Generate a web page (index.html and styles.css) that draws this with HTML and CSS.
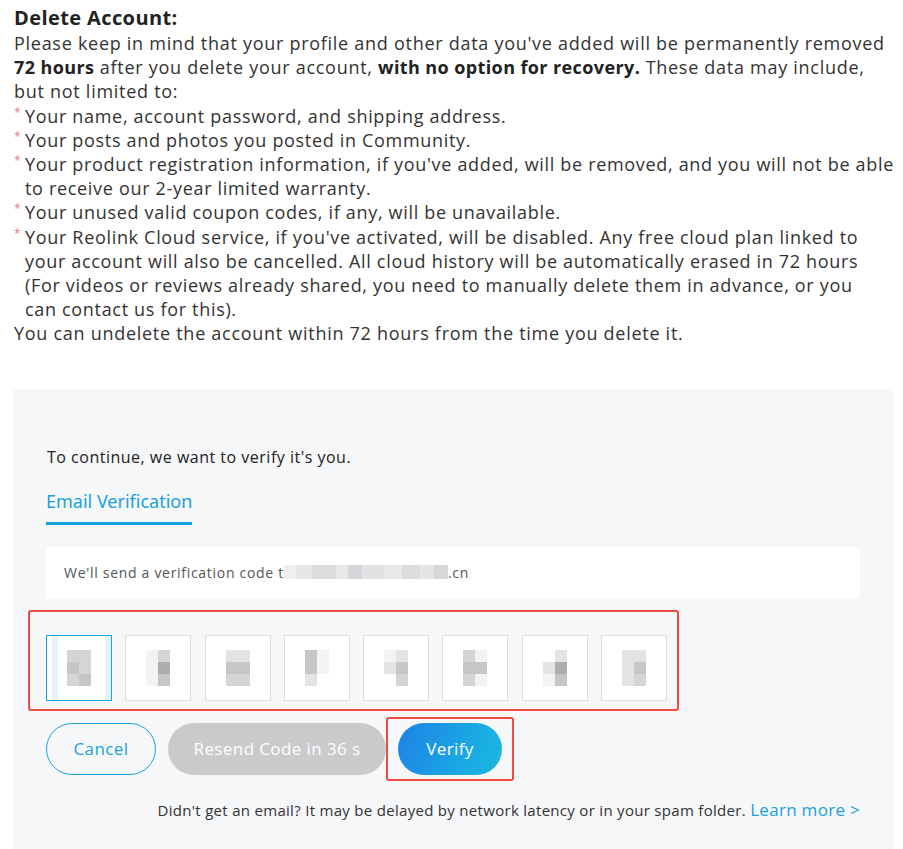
FILE: index.html
```html
<!DOCTYPE html>
<html lang="en">
<head>
<meta charset="utf-8">
<title>Delete Account</title>
<link rel="stylesheet" href="styles.css">
</head>
<body>
<section class="intro">
  <h1 class="title">Delete Account:</h1>
  <p class="para">Please keep in mind that your profile and other data you've added will be permanently removed<br><b>72 hours</b> after you delete your account, <b>with no option for recovery.</b> These data may include,<br>but not limited to:</p>
  <ul class="list">
    <li><span class="star">*</span><span class="item">Your name, account password, and shipping address.</span></li>
    <li><span class="star">*</span><span class="item">Your posts and photos you posted in Community.</span></li>
    <li><span class="star">*</span><span class="item">Your product registration information, if you've added, will be removed, and you will not be able<br>to receive our 2-year limited warranty.</span></li>
    <li><span class="star">*</span><span class="item">Your unused valid coupon codes, if any, will be unavailable.</span></li>
    <li><span class="star">*</span><span class="item">Your Reolink Cloud service, if you've activated, will be disabled. Any free cloud plan linked to<br>your account will also be cancelled. All cloud history will be automatically erased in 72 hours<br>(For videos or reviews already shared, you need to manually delete them in advance, or you<br>can contact us for this).</span></li>
  </ul>
  <p class="para">You can undelete the account within 72 hours from the time you delete it.</p>
</section>

<section class="panel">
  <p class="lead">To continue, we want to verify it's you.</p>
  <div class="tabs"><span class="tab">Email Verification</span></div>
  <div class="notice">We'll send a verification code t<span class="masked"></span>.cn</div>

  <div class="code-wrap">
    <div class="codes">
      <div class="code active"><div class="blur"><i class="g2"></i><i class="g2"></i><i class="g3"></i><i class="g2"></i><i class="g2"></i><i class="g3"></i></div></div>
      <div class="code"><div class="blur"><i class="g0"></i><i class="g2"></i><i class="g0"></i><i class="g4"></i><i class="g0"></i><i class="g3"></i></div></div>
      <div class="code"><div class="blur"><i class="g1"></i><i class="g1"></i><i class="g3"></i><i class="g3"></i><i class="g2"></i><i class="g2"></i></div></div>
      <div class="code"><div class="blur"><i class="g3"></i><i class="g0"></i><i class="g3"></i><i class="g0"></i><i class="g1"></i><i class="w"></i></div></div>
      <div class="code"><div class="blur"><i class="g0"></i><i class="g1"></i><i class="g1"></i><i class="g3"></i><i class="w"></i><i class="g2"></i></div></div>
      <div class="code"><div class="blur"><i class="g2"></i><i class="g0"></i><i class="g3"></i><i class="g3"></i><i class="g2"></i><i class="g0"></i></div></div>
      <div class="code"><div class="blur"><i class="w"></i><i class="g1"></i><i class="g1"></i><i class="g4"></i><i class="g0"></i><i class="g3"></i></div></div>
      <div class="code"><div class="blur"><i class="g1"></i><i class="g1"></i><i class="g1"></i><i class="g3"></i><i class="g1"></i><i class="g2"></i></div></div>
    </div>
  </div>

  <div class="actions">
    <button class="btn btn-cancel">Cancel</button>
    <button class="btn btn-resend">Resend Code in 36 s</button>
    <div class="verify-wrap"><button class="btn btn-verify">Verify</button></div>
  </div>

  <p class="help">Didn't get an email? It may be delayed by network latency or in your spam folder. <a class="link" href="#">Learn more &gt;</a></p>
</section>
</body>
</html>
```
FILE: styles.css
```css
* { box-sizing: border-box; }
html, body { margin: 0; padding: 0; background: #fff; }
body {
  font-family: "Open Sans", "Noto Sans", sans-serif;
  color: #333;
}

.intro {
  padding: 5px 0 0 14px;
  width: 903px;
}
.title {
  margin: 0;
  font-size: 20px;
  line-height: 26px;
  font-weight: 700;
  letter-spacing: 0.4px;
  color: #222;
}
.para {
  margin: 0;
  font-size: 18px;
  line-height: 24.2px;
  letter-spacing: 0.72px;
  white-space: nowrap;
}
.para b { font-weight: 700; color: #222; letter-spacing: 0.4px; }
.list {
  list-style: none;
  margin: 0;
  padding: 0;
  font-size: 18px;
  line-height: 24.2px;
  letter-spacing: 0.68px;
}
.list li { display: flex; }
.item { white-space: nowrap; }
.star {
  flex: 0 0 11px;
  color: #f07a7a;
  font-size: 12px;
  line-height: 18px;
  letter-spacing: 0;
}

.panel {
  margin: 43px 0 0 13px;
  width: 880px;
  background: #f6f7f9;
  padding: 57px 33px 50px 33px;
}
.lead {
  margin: 0 0 0 1px;
  font-size: 16px;
  line-height: 22px;
  letter-spacing: 0.5px;
  color: #222;
}
.tabs {
  margin-top: 21px;
  display: flex;
}
.tab {
  font-family: "Noto Sans", "Open Sans", sans-serif;
  font-size: 18px;
  line-height: 24px;
  color: #1aa1dc;
  padding-bottom: 9px;
  border-bottom: 3px solid #12a2dc;
}
.notice {
  margin-top: 22px;
  background: #fff;
  height: 51px;
  display: flex;
  align-items: center;
  padding-left: 18px;
  font-size: 14px;
  letter-spacing: 0.7px;
  color: #555;
}
.masked {
  display: inline-block;
  width: 164px;
  height: 14px;
  background: linear-gradient(90deg, #f0f0f0 0 12px, #e6e6e6 12px 28px, #dcdcdc 28px 52px, #e8e8e8 52px 64px, #d6d6da 64px 78px, #e2e2e2 78px 100px, #e8e8e8 100px 118px, #dcdcdc 118px 136px, #e4e4e4 136px 150px, #d8d8d8 150px 164px);
}

.code-wrap {
  margin-top: 12px;
  margin-left: -18px;
  width: 651px;
  border: 2px solid #ef4b3e;
  border-radius: 3px;
  padding: 23px 0 8px 16px;
}
.codes {
  display: flex;
  gap: 13.3px;
}
.code {
  width: 66px;
  height: 66px;
  background: #fff;
  border: 1px solid #dedede;
  display: flex;
  align-items: center;
  justify-content: center;
}
.code.active {
  border-color: #14a3dc;
  background: linear-gradient(90deg, #fff 0 5px, #e4f3fa 5px 11px, #fff 11px 58px, #e4f3fa 58px 64px, #fff 64px);
}
.blur {
  width: 24px;
  height: 36px;
  display: grid;
  grid-template-columns: 12px 12px;
  grid-template-rows: 12px 12px 12px;
}
.blur i { display: block; }
.g0 { background: #f3f3f3; }
.g1 { background: #e4e3e3; }
.g2 { background: #d6d5d5; }
.g3 { background: #c6c6c7; }
.g4 { background: #acadad; }
.w { background: #fff; }

.actions {
  margin-top: 6px;
  display: flex;
  align-items: center;
}
.btn {
  font-family: "Open Sans", "Noto Sans", sans-serif;
  height: 52px;
  border-radius: 26px;
  font-size: 17px;
  letter-spacing: 0.4px;
  padding: 0;
  cursor: pointer;
}
.btn-cancel {
  width: 110px;
  background: transparent;
  border: 1px solid #18a3dc;
  color: #1aa1dc;
}
.btn-resend {
  width: 218px;
  margin-left: 12px;
  background: #c9cacb;
  border: none;
  color: #fff;
}
.verify-wrap {
  border: 2px solid #ef4b3e;
  border-radius: 3px;
  padding: 4px 10px 4px 10px;
}
.btn-verify {
  display: block;
  width: 104px;
  border: none;
  color: #fff;
  background: linear-gradient(110deg, #1d82e6 0%, #1aa6e3 60%, #1bb9e0 100%);
}

.help {
  margin: 18px 0 0 0;
  text-align: right;
  font-size: 15px;
  line-height: 22px;
  letter-spacing: 0.3px;
  color: #333;
}
.link {
  color: #1aa1dc;
  text-decoration: none;
  font-size: 17px;
}
```
